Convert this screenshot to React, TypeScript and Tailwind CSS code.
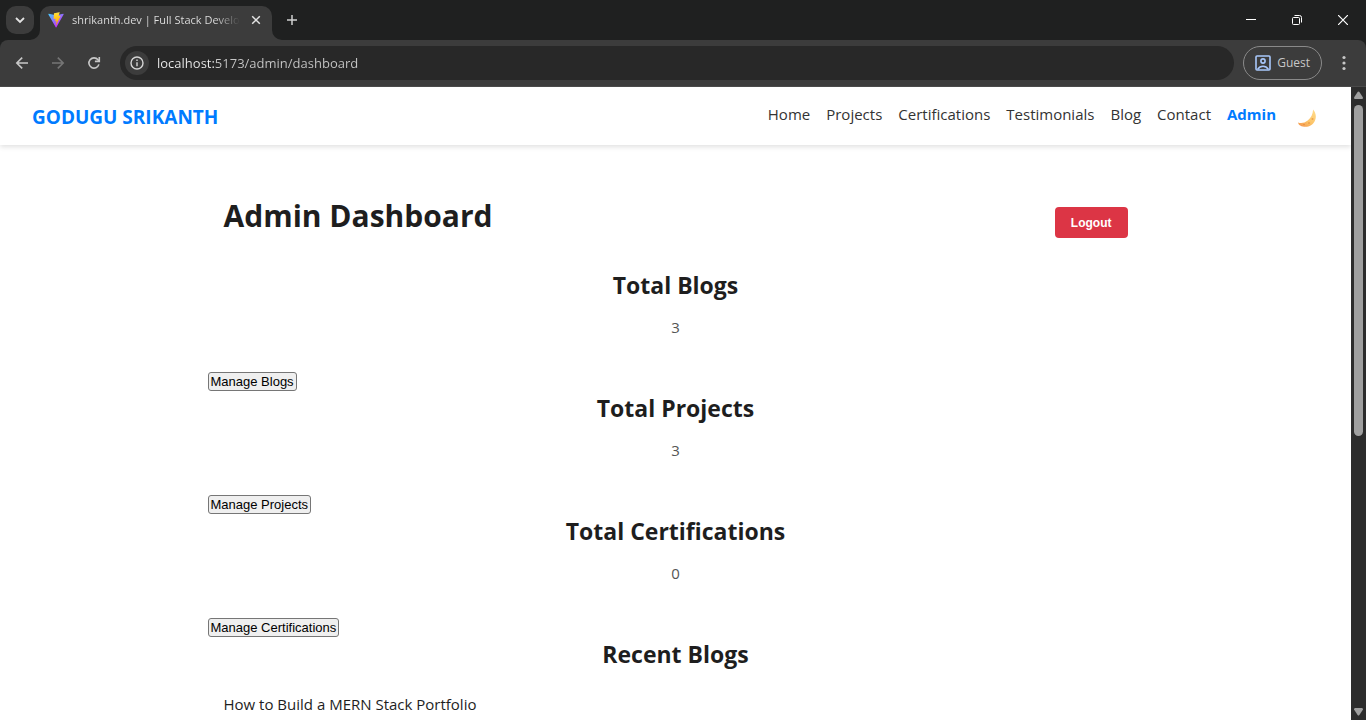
import React from "react";

const NAV = ["Home", "Projects", "Certifications", "Testimonials", "Blog", "Contact"];

const SECTIONS = [
  { title: "Total Blogs", count: 3, action: "Manage Blogs" },
  { title: "Total Projects", count: 3, action: "Manage Projects" },
  { title: "Total Certifications", count: 0, action: "Manage Certifications" },
];

function ViteLogo() {
  return (
    <svg viewBox="0 0 410 404" className="size-4 shrink-0" aria-hidden="true">
      <defs>
        <linearGradient id="vg" x1="6" y1="33" x2="235" y2="344" gradientUnits="userSpaceOnUse">
          <stop stopColor="#41D1FF" />
          <stop offset="1" stopColor="#BD34FE" />
        </linearGradient>
        <linearGradient id="vb" x1="194" y1="9" x2="236" y2="293" gradientUnits="userSpaceOnUse">
          <stop stopColor="#FFEA83" />
          <stop offset="0.083" stopColor="#FFDD35" />
          <stop offset="1" stopColor="#FFA800" />
        </linearGradient>
      </defs>
      <path d="M399.641 59.525L215.643 388.545c-3.799 6.793-13.559 6.833-17.415.073L10.582 59.556C6.381 52.19 12.68 43.267 21.028 44.759l184.195 32.924c1.175.21 2.378.208 3.553-.006l180.343-32.87c8.32-1.517 14.649 7.337 10.522 14.718z" fill="url(#vg)" />
      <path d="M292.965 1.574L156.801 28.255a5 5 0 0 0-4.03 4.611l-8.376 141.464c-.197 3.332 2.863 5.918 6.115 5.168l37.91-8.749c3.547-.818 6.752 2.306 6.023 5.873l-11.263 55.153c-.758 3.712 2.727 6.886 6.352 5.785l23.415-7.114c3.63-1.102 7.118 2.081 6.35 5.796l-17.899 86.633c-1.12 5.419 6.088 8.374 9.094 3.728l2.008-3.103 110.954-221.428c1.858-3.707-1.346-7.935-5.418-7.15l-39.022 7.532c-3.667.707-6.787-2.708-5.752-6.296l25.469-88.291c1.036-3.594-2.095-7.012-5.766-6.293z" fill="url(#vb)" />
    </svg>
  );
}

function TabBar() {
  return (
    <div className="flex h-10 items-end bg-[#1f2020] pl-1.5">
      <button aria-label="Search tabs" className="mb-1.5 flex size-7 items-center justify-center rounded-[10px] bg-[#3c3c3c] text-[#e3e3e3]">
        <svg viewBox="0 0 10 10" className="size-2.5" fill="none" stroke="currentColor" strokeWidth="1.8">
          <path d="M1 3l4 4 4-4" />
        </svg>
      </button>
      <div className="relative ml-1.5 flex h-[34px] w-[232px] items-center rounded-t-[10px] bg-[#3c3c3c] pr-2 pb-1.5 pl-2">
        <svg viewBox="0 0 10 10" className="absolute bottom-0 -left-2.5 size-2.5" fill="#3c3c3c" aria-hidden="true">
          <path d="M10 0v10H0A10 10 0 0 0 10 0z" />
        </svg>
        <svg viewBox="0 0 10 10" className="absolute -right-2.5 bottom-0 size-2.5" fill="#3c3c3c" aria-hidden="true">
          <path d="M0 0v10h10A10 10 0 0 1 0 0z" />
        </svg>
        <ViteLogo />
        <span className="ml-2 w-[168px] overflow-hidden bg-linear-to-r from-[#e3e3e3] from-85% to-transparent bg-clip-text text-[11px] leading-5 whitespace-nowrap text-transparent">
          shrikanth.dev | Full Stack Developer
        </span>
        <button aria-label="Close tab" className="ml-auto flex size-4 items-center justify-center text-[#e3e3e3]">
          <svg viewBox="0 0 10 10" className="size-2.5" fill="none" stroke="currentColor" strokeWidth="1.5">
            <path d="M1.2 1.2l7.6 7.6M8.8 1.2L1.2 8.8" />
          </svg>
        </button>
      </div>
      <button aria-label="New tab" className="mb-1.5 ml-1.5 flex size-7 items-center justify-center text-[#d0d0d0]">
        <svg viewBox="0 0 12 12" className="size-3" fill="none" stroke="currentColor" strokeWidth="1.5">
          <path d="M6 1v10M1 6h10" />
        </svg>
      </button>
      <div className="ml-auto flex h-10 text-white">
        <button aria-label="Minimize" className="flex w-[46px] items-center justify-center">
          <svg viewBox="0 0 10 10" className="size-2.5" stroke="currentColor"><path d="M0 4.5h10" /></svg>
        </button>
        <button aria-label="Restore" className="flex w-[46px] items-center justify-center">
          <svg viewBox="0 0 10 10" className="size-2.5" fill="none" stroke="currentColor">
            <rect x="0.5" y="2.5" width="7" height="7" rx="1" />
            <path d="M2.5 .5h5a2 2 0 0 1 2 2v5" />
          </svg>
        </button>
        <button aria-label="Close" className="flex w-[46px] items-center justify-center">
          <svg viewBox="0 0 10 10" className="size-2.5" stroke="currentColor" strokeWidth="1.2"><path d="M0 0l10 10M10 0L0 10" /></svg>
        </button>
      </div>
    </div>
  );
}

function Toolbar() {
  return (
    <div className="bg-[#1f2020]">
      <div className="flex h-[47px] items-center rounded-t-lg border-b border-[#4a4a4a] bg-[#3c3c3c] pr-2 pl-1">
        <button aria-label="Back" className="flex size-9 items-center justify-center text-[#c7c7c7]">
          <svg viewBox="0 0 16 16" className="size-4" fill="none" stroke="currentColor" strokeWidth="1.6">
            <path d="M14 8H3M8.2 2.6L2.8 8l5.4 5.4" />
          </svg>
        </button>
        <button aria-label="Forward" className="flex size-9 items-center justify-center text-[#757575]">
          <svg viewBox="0 0 16 16" className="size-4" fill="none" stroke="currentColor" strokeWidth="1.6">
            <path d="M2 8h11M7.8 2.6L13.2 8l-5.4 5.4" />
          </svg>
        </button>
        <button aria-label="Reload" className="flex size-9 items-center justify-center text-[#c7c7c7]">
          <svg viewBox="0 0 16 16" className="size-4" fill="none" stroke="currentColor" strokeWidth="1.6">
            <path d="M12.9 9.4A5.1 5.1 0 1 1 12 4.8l1 1.2" />
            <path d="M13.3 2v4.4H8.9" />
          </svg>
        </button>
        <div className="ml-2 flex h-[34px] flex-1 items-center rounded-full bg-[#282828] pl-[5px]">
          <button aria-label="Site information" className="flex size-6 items-center justify-center rounded-full bg-[#3c3c3c] text-[#d5d5d5]">
            <svg viewBox="0 0 14 14" className="size-3.5" fill="none" stroke="currentColor" strokeWidth="1.4">
              <circle cx="7" cy="7" r="6" />
              <path d="M7 6.2v4M7 3.6v1.5" />
            </svg>
          </button>
          <input
            aria-label="Address"
            defaultValue="localhost:5173/admin/dashboard"
            className="ml-2 h-5 flex-1 bg-linear-to-r from-[#eeeeee] from-[58px] to-[#c7c7c7] to-[58px] bg-clip-text text-[13px] leading-5 text-transparent outline-none"
          />
        </div>
        <button className="ml-[9px] flex h-[34px] items-center gap-1.5 rounded-full border border-[#8a8a8a] px-[11px] text-[12px] text-[#c7c7c7]">
          <svg viewBox="0 0 16 16" className="size-4" fill="none" stroke="#a8c7fa" strokeWidth="1.6">
            <rect x="1" y="1" width="14" height="14" rx="1" />
            <circle cx="8" cy="6" r="2.1" />
            <path d="M2.6 14.4C4 12.3 5.8 11.3 8 11.3s4 1 5.4 3.1" />
          </svg>
          Guest
        </button>
        <button aria-label="Menu" className="ml-2 flex size-7 items-center justify-center">
          <svg viewBox="0 0 4 16" className="h-4 w-1" fill="#c7c7c7">
            <circle cx="2" cy="2.5" r="1.6" />
            <circle cx="2" cy="8" r="1.6" />
            <circle cx="2" cy="13.5" r="1.6" />
          </svg>
        </button>
      </div>
    </div>
  );
}

function Moon() {
  return (
    <svg viewBox="0 0 20 20" className="size-5" aria-hidden="true">
      <defs>
        <linearGradient id="moon" x1="16" y1="3" x2="6" y2="19" gradientUnits="userSpaceOnUse">
          <stop stopColor="#ffd886" />
          <stop offset="0.6" stopColor="#fcc468" />
          <stop offset="1" stopColor="#f59e52" />
        </linearGradient>
      </defs>
      <path d="M16 1.5C18.8 4.5 19.8 9 17.8 13 15.3 18.4 8.5 20.5 3.2 17.4 2 16.7 1.2 15.5 1 14.4c3 1.2 6.6 .6 9.700-1.900C14.200 9.700 16.200 5.500 16 1.500z" fill="url(#moon)" />
      <circle cx="15.5" cy="11" r="1" fill="#eea24c" />
      <circle cx="12" cy="15" r="1" fill="#eea24c" />
      <circle cx="7" cy="16.5" r="0.8" fill="#e98a45" />
    </svg>
  );
}

function Scrollbar() {
  return (
    <div className="flex w-[15px] shrink-0 flex-col items-center bg-[#2c2c2c] pt-1 pb-1" aria-hidden="true">
      <svg viewBox="0 0 9 8" className="h-2 w-[9px]" fill="#9f9f9f"><path d="M4.5 0.5Q5 .5 5.4 1L9 6.5Q9 8 8 8H1Q0 8 0 6.5L3.6 1Q4 .5 4.5.5z" /></svg>
      <div className="mt-1.5 w-[9px] basis-[53%] rounded-full bg-[#9f9f9f]" />
      <svg viewBox="0 0 9 8" className="mt-auto h-2 w-[9px]" fill="#9f9f9f"><path d="M4.5 7.5Q4 7.5 3.6 7L0 1.5Q0 0 1 0h7Q9 0 9 1.5L5.4 7Q5 7.5 4.5 7.5z" /></svg>
    </div>
  );
}

export default function App() {
  return (
    <div className="flex h-screen flex-col overflow-hidden bg-white font-['Segoe_UI','Open_Sans',sans-serif]">
      <TabBar />
      <Toolbar />
      <div className="flex min-h-0 flex-1">
        <div className="min-w-0 flex-1 overflow-hidden text-[#1e1e1e]">
          <nav className="flex h-[58px] items-center justify-between px-8 shadow-[0_2px_5px_rgba(0,0,0,0.12)]">
            <a href="#home" className="mt-0.5 text-[19px] font-bold text-[#007bff]">GODUGU SRIKANTH</a>
            <div className="flex items-center gap-4">
              <ul className="mb-1 flex items-center gap-4 text-[15px] text-[#333]">
                {NAV.map((n) => (
                  <li key={n}><a href={"#" + n.toLowerCase()}>{n}</a></li>
                ))}
                <li><a href="#admin" className="font-bold text-[#007bff]">Admin</a></li>
              </ul>
              <button aria-label="Toggle theme" className="mt-1 flex pr-0.5 pl-[5px]"><Moon /></button>
            </div>
          </nav>
          <main className="mx-auto max-w-[1000px] px-8 pt-12">
            <header className="mb-4 flex items-center justify-between px-4">
              <h1 className="mb-[13px] text-[30px] leading-[46px] font-bold">Admin Dashboard</h1>
              <button className="h-[31px] rounded bg-[#dc3545] px-4 font-['Liberation_Sans',sans-serif] text-[12px] font-bold text-white">Logout</button>
            </header>
            {SECTIONS.map((s) => (
              <section key={s.title}>
                <h2 className="text-center text-[23px] leading-[34px] font-bold">{s.title}</h2>
                <p className="mt-[13px] mb-[33px] text-center text-[15px] leading-6 text-[#555]">{s.count}</p>
                <button className="block h-[19px] rounded-[3px] border border-[#767676] bg-[#efefef] px-0.5 font-['Liberation_Sans',sans-serif] text-[13px] leading-4 text-black">
                  {s.action}
                </button>
              </section>
            ))}
            <section>
              <h2 className="text-center text-[23px] leading-[34px] font-bold">Recent Blogs</h2>
              <ul className="mt-[21px] px-4 text-[15px] leading-6">
                <li>How to Build a MERN Stack Portfolio</li>
              </ul>
            </section>
          </main>
        </div>
        <Scrollbar />
      </div>
    </div>
  );
}
